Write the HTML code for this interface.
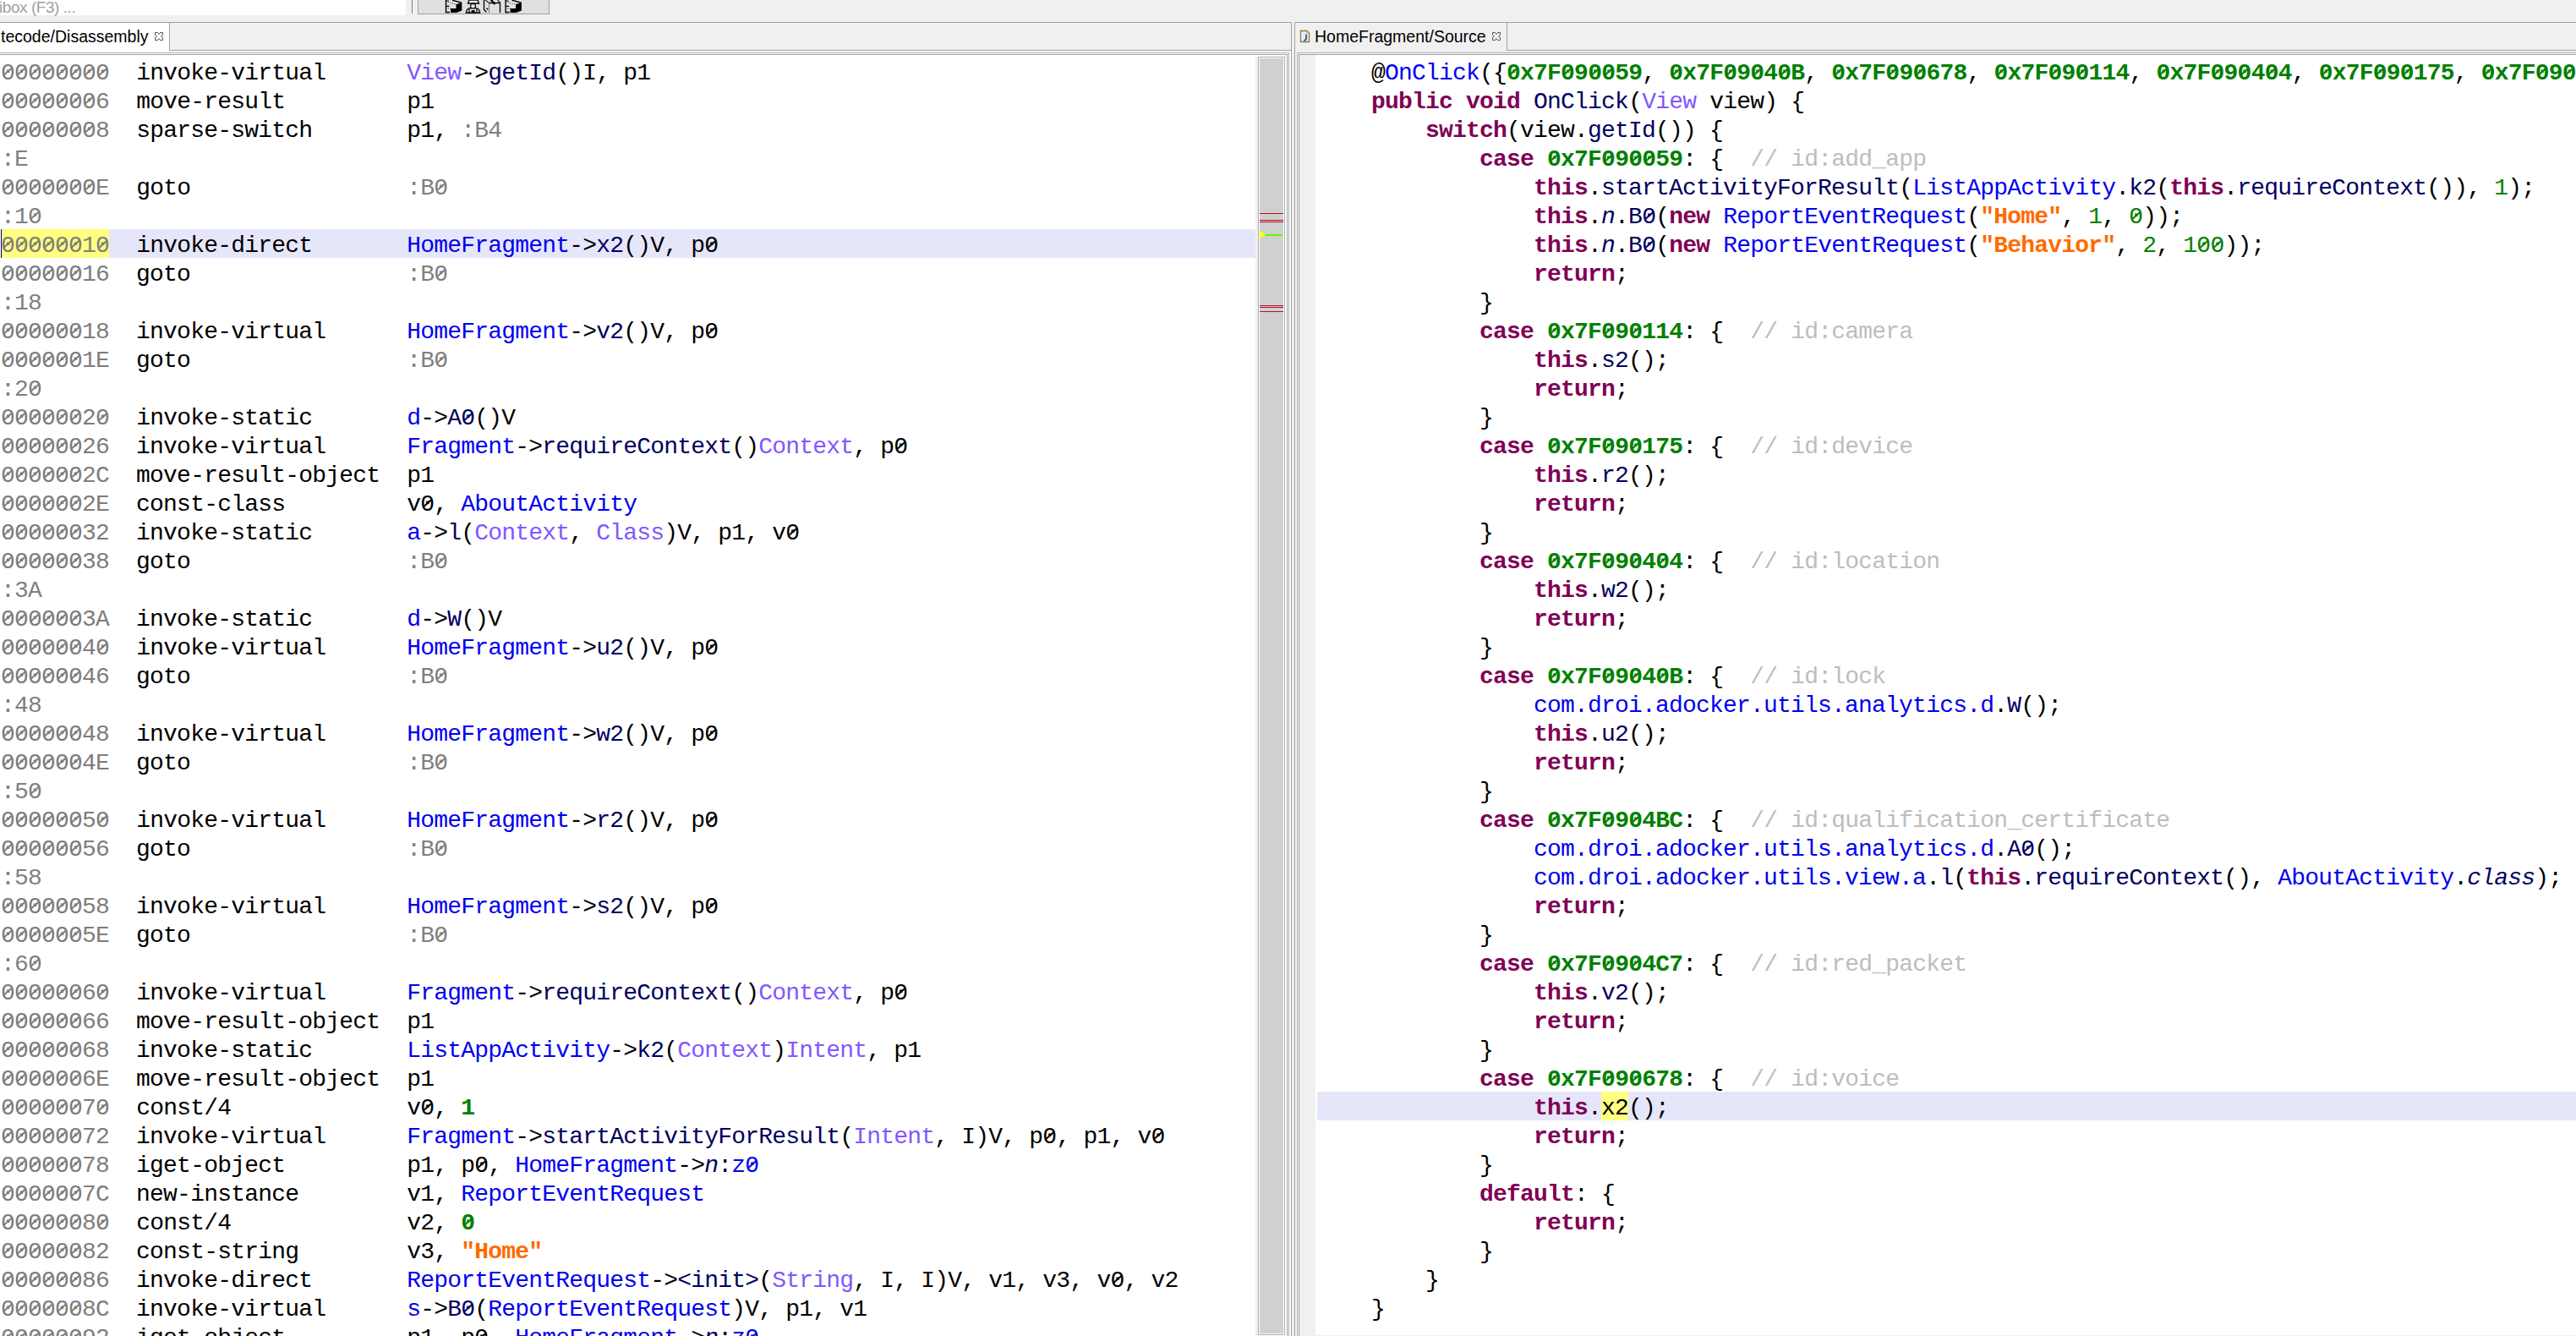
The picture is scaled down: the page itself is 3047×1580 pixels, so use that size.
<!DOCTYPE html>
<html><head><meta charset="utf-8">
<style>
html,body{margin:0;padding:0}
body{width:3047px;height:1580px;overflow:hidden;position:relative;background:#f0f0f0;font-family:"Liberation Sans",sans-serif}
.abs{position:absolute;box-sizing:border-box}
.code{position:absolute;overflow:hidden;font-family:"Liberation Mono",monospace;font-size:28px;line-height:34px;letter-spacing:-0.8px;color:#000;background:#fff}
.ln{position:absolute;left:0;right:0;height:34px;line-height:40px;white-space:pre;z-index:0}
.yb{position:absolute;top:0;height:34px;background:#ffff80;z-index:-1}
.ln>.tx{position:relative}
.hl{background:#e6e6fa}
.a{color:#7d7d7d}
.l{color:#808080}
.e{color:#8257ff}
.t{color:#0000f0}
.m{color:#000060}
.f{color:#000060;font-style:italic}
.k{color:#7f0055;font-weight:bold}
.n{color:#008000;font-weight:bold}
.g{color:#008000}
.s{color:#ff6a00;font-weight:bold}
.c{color:#bdbdbd}
.hy{}
.hya{color:#7d7d7d}
.z{position:relative}
.z::after{content:"";position:absolute;left:2.4px;top:13.3px;width:11.6px;height:1.6px;background:currentColor;transform:rotate(-42deg)}
.k .z::after,.n .z::after,.s .z::after{height:2.4px;top:12.9px}
.tab{font-size:19.5px;color:#000;white-space:pre}
</style></head><body>
<!-- top strip -->
<div class="abs" style="left:0;top:0;width:480px;height:18px;background:#fff"></div>
<div class="abs tab" style="left:-1px;top:-1px;color:#a0a0a0;font-size:19px;line-height:20px;letter-spacing:-0.45px">ibox (F3) ...</div>
<div class="abs" style="left:487px;top:0;width:1px;height:16px;background:#808080"></div>
<div class="abs" style="left:494px;top:-1px;width:156px;height:18px;background:#e0e0e0;border:1px solid #a0a0a0"></div>
<svg class="abs" style="left:0;top:0" width="700" height="18" viewBox="0 0 700 18">
 <g>
  <path d="M529,1 L545.5,3.5 L539.5,5.5 L529,3 Z M529,8 L539.5,10.5 L533,10.5 L529,9.5 Z" fill="#f4f4f4"/>
  <path d="M527.5,0 V14.5 H532" fill="none" stroke="#000" stroke-width="1.4"/>
  <path d="M527.5,1 H531 M527.5,7.3 H531.5" fill="none" stroke="#000" stroke-width="1.2"/>
  <path d="M535,0.3 L546,3.3" fill="none" stroke="#000" stroke-width="1.4"/>
  <path d="M529.5,2.3 L541,5.5 M529.5,9.5 L537,11" fill="none" stroke="#333" stroke-width="1" stroke-dasharray="1.5 1.2"/>
  <path d="M539.5,5 L546.3,3 L546.3,12.5 L540,15 L533,15 L533,10 L539.5,10 Z" fill="#000"/>
 </g>
 <g transform="translate(70.6,0)">
  <path d="M529,1 L545.5,3.5 L539.5,5.5 L529,3 Z M529,8 L539.5,10.5 L533,10.5 L529,9.5 Z" fill="#f4f4f4"/>
  <path d="M527.5,0 V14.5 H532" fill="none" stroke="#000" stroke-width="1.4"/>
  <path d="M527.5,1 H531 M527.5,7.3 H531.5" fill="none" stroke="#000" stroke-width="1.2"/>
  <path d="M535,0.3 L546,3.3" fill="none" stroke="#000" stroke-width="1.4"/>
  <path d="M529.5,2.3 L541,5.5 M529.5,9.5 L537,11" fill="none" stroke="#333" stroke-width="1" stroke-dasharray="1.5 1.2"/>
  <path d="M539.5,5 L546.3,3 L546.3,12.5 L540,15 L533,15 L533,10 L539.5,10 Z" fill="#000"/>
 </g>
 <path d="M553.5,4 L555,0 H565 L566.5,4 Z" fill="#f2efe8" stroke="#000" stroke-width="1.3"/>
 <circle cx="559.5" cy="7.3" r="3" fill="#f2ece6" stroke="#000" stroke-width="1.2"/>
 <path d="M551.3,15 Q552,9.8 556,9.8 H563 Q567,9.8 567.7,15 Z" fill="#ece8e4" stroke="#000" stroke-width="1.3"/>
 <path d="M555,10.5 V15 M564,10.5 V15" stroke="#000" stroke-width="1.2"/>
 <rect x="557.6" y="12" width="4" height="3.2" fill="#000"/>
 <path d="M572.5,0 V11.5 L575.5,14.5 M591.5,3.5 V15 M578.5,3.5 H591.5" fill="none" stroke="#000" stroke-width="1.3"/>
 <path d="M578.5,3.5 V15" fill="none" stroke="#7a6ab0" stroke-width="1"/>
 <path d="M574,0 L578.5,3.5 M588.5,0 L592,3.5" fill="none" stroke="#222" stroke-width="1.1"/>
 <path d="M580.5,-0.5 L585.5,5" fill="none" stroke="#000" stroke-width="2.2"/>
 <circle cx="576.3" cy="10.5" r="1.1" fill="#000"/>
</svg>

<!-- LEFT FOLDER -->
<div class="abs" style="left:-2px;top:26px;width:1530px;height:1600px;border-top:1px solid #a0a0a0;border-right:1px solid #a0a0a0;border-top-right-radius:2px;background:#f0f0f0"></div>
<div class="abs" style="left:0;top:27px;width:201px;height:34px;background:#fff;border-right:1px solid #a0a0a0"></div>
<div class="abs" style="left:200px;top:59px;width:1327px;height:1px;background:#a0a0a0"></div>
<div class="abs" style="left:0;top:60px;width:1527px;height:1540px;background:#fff"></div>
<div class="abs" style="left:-2px;top:62px;width:1527px;height:1600px;border-top:1px solid #a9acb3;border-right:1px solid #a9acb3;background:#fff"></div>
<div class="abs" style="left:-2px;top:64px;width:1525px;height:1600px;border-top:1px solid #a0a0a0;border-right:1px solid #a0a0a0;background:#fff"></div>
<div class="abs tab" style="left:1px;top:27px;height:32px;line-height:32px">tecode/Disassembly</div>
<svg class="abs" style="left:182px;top:37px" width="12" height="12" viewBox="0 0 12 12"><path d="M1.5 1.5 h3 l1.5 2 l1.5 -2 h3 v3 l-2 1.5 l2 1.5 v3 h-3 l-1.5 -2 l-1.5 2 h-3 v-3 l2 -1.5 l-2 -1.5 z" fill="none" stroke="#555" stroke-width="1"/></svg>
<div class="code" style="left:0;top:65px;width:1485px;height:1520px">
 <div style="position:absolute;left:1px;top:2px;right:0;bottom:0">
<div class="ln" style="top:0px"><span class="a"><span class="z">0</span><span class="z">0</span><span class="z">0</span><span class="z">0</span><span class="z">0</span><span class="z">0</span><span class="z">0</span><span class="z">0</span></span>  invoke-virtual      <span class="e">View</span>-&gt;<span class="m">getId</span>()I, p1</div>
<div class="ln" style="top:34px"><span class="a"><span class="z">0</span><span class="z">0</span><span class="z">0</span><span class="z">0</span><span class="z">0</span><span class="z">0</span><span class="z">0</span>6</span>  move-result         p1</div>
<div class="ln" style="top:68px"><span class="a"><span class="z">0</span><span class="z">0</span><span class="z">0</span><span class="z">0</span><span class="z">0</span><span class="z">0</span><span class="z">0</span>8</span>  sparse-switch       p1, <span class="l">:B4</span></div>
<div class="ln" style="top:102px"><span class="l">:E</span></div>
<div class="ln" style="top:136px"><span class="a"><span class="z">0</span><span class="z">0</span><span class="z">0</span><span class="z">0</span><span class="z">0</span><span class="z">0</span><span class="z">0</span>E</span>  goto                <span class="l">:B<span class="z">0</span></span></div>
<div class="ln" style="top:170px"><span class="l">:1<span class="z">0</span></span></div>
<div class="ln hl" style="top:204px"><span class="yb" style="left:0px;width:128px"></span><span class="hya"><span class="z">0</span><span class="z">0</span><span class="z">0</span><span class="z">0</span><span class="z">0</span><span class="z">0</span>1<span class="z">0</span></span>  invoke-direct       <span class="t">HomeFragment</span>-&gt;<span class="m">x2</span>()V, p<span class="z">0</span></div>
<div class="ln" style="top:238px"><span class="a"><span class="z">0</span><span class="z">0</span><span class="z">0</span><span class="z">0</span><span class="z">0</span><span class="z">0</span>16</span>  goto                <span class="l">:B<span class="z">0</span></span></div>
<div class="ln" style="top:272px"><span class="l">:18</span></div>
<div class="ln" style="top:306px"><span class="a"><span class="z">0</span><span class="z">0</span><span class="z">0</span><span class="z">0</span><span class="z">0</span><span class="z">0</span>18</span>  invoke-virtual      <span class="t">HomeFragment</span>-&gt;<span class="m">v2</span>()V, p<span class="z">0</span></div>
<div class="ln" style="top:340px"><span class="a"><span class="z">0</span><span class="z">0</span><span class="z">0</span><span class="z">0</span><span class="z">0</span><span class="z">0</span>1E</span>  goto                <span class="l">:B<span class="z">0</span></span></div>
<div class="ln" style="top:374px"><span class="l">:2<span class="z">0</span></span></div>
<div class="ln" style="top:408px"><span class="a"><span class="z">0</span><span class="z">0</span><span class="z">0</span><span class="z">0</span><span class="z">0</span><span class="z">0</span>2<span class="z">0</span></span>  invoke-static       <span class="t">d</span>-&gt;<span class="m">A<span class="z">0</span></span>()V</div>
<div class="ln" style="top:442px"><span class="a"><span class="z">0</span><span class="z">0</span><span class="z">0</span><span class="z">0</span><span class="z">0</span><span class="z">0</span>26</span>  invoke-virtual      <span class="t">Fragment</span>-&gt;<span class="m">requireContext</span>()<span class="e">Context</span>, p<span class="z">0</span></div>
<div class="ln" style="top:476px"><span class="a"><span class="z">0</span><span class="z">0</span><span class="z">0</span><span class="z">0</span><span class="z">0</span><span class="z">0</span>2C</span>  move-result-object  p1</div>
<div class="ln" style="top:510px"><span class="a"><span class="z">0</span><span class="z">0</span><span class="z">0</span><span class="z">0</span><span class="z">0</span><span class="z">0</span>2E</span>  const-class         v<span class="z">0</span>, <span class="t">AboutActivity</span></div>
<div class="ln" style="top:544px"><span class="a"><span class="z">0</span><span class="z">0</span><span class="z">0</span><span class="z">0</span><span class="z">0</span><span class="z">0</span>32</span>  invoke-static       <span class="t">a</span>-&gt;<span class="m">l</span>(<span class="e">Context</span>, <span class="e">Class</span>)V, p1, v<span class="z">0</span></div>
<div class="ln" style="top:578px"><span class="a"><span class="z">0</span><span class="z">0</span><span class="z">0</span><span class="z">0</span><span class="z">0</span><span class="z">0</span>38</span>  goto                <span class="l">:B<span class="z">0</span></span></div>
<div class="ln" style="top:612px"><span class="l">:3A</span></div>
<div class="ln" style="top:646px"><span class="a"><span class="z">0</span><span class="z">0</span><span class="z">0</span><span class="z">0</span><span class="z">0</span><span class="z">0</span>3A</span>  invoke-static       <span class="t">d</span>-&gt;<span class="m">W</span>()V</div>
<div class="ln" style="top:680px"><span class="a"><span class="z">0</span><span class="z">0</span><span class="z">0</span><span class="z">0</span><span class="z">0</span><span class="z">0</span>4<span class="z">0</span></span>  invoke-virtual      <span class="t">HomeFragment</span>-&gt;<span class="m">u2</span>()V, p<span class="z">0</span></div>
<div class="ln" style="top:714px"><span class="a"><span class="z">0</span><span class="z">0</span><span class="z">0</span><span class="z">0</span><span class="z">0</span><span class="z">0</span>46</span>  goto                <span class="l">:B<span class="z">0</span></span></div>
<div class="ln" style="top:748px"><span class="l">:48</span></div>
<div class="ln" style="top:782px"><span class="a"><span class="z">0</span><span class="z">0</span><span class="z">0</span><span class="z">0</span><span class="z">0</span><span class="z">0</span>48</span>  invoke-virtual      <span class="t">HomeFragment</span>-&gt;<span class="m">w2</span>()V, p<span class="z">0</span></div>
<div class="ln" style="top:816px"><span class="a"><span class="z">0</span><span class="z">0</span><span class="z">0</span><span class="z">0</span><span class="z">0</span><span class="z">0</span>4E</span>  goto                <span class="l">:B<span class="z">0</span></span></div>
<div class="ln" style="top:850px"><span class="l">:5<span class="z">0</span></span></div>
<div class="ln" style="top:884px"><span class="a"><span class="z">0</span><span class="z">0</span><span class="z">0</span><span class="z">0</span><span class="z">0</span><span class="z">0</span>5<span class="z">0</span></span>  invoke-virtual      <span class="t">HomeFragment</span>-&gt;<span class="m">r2</span>()V, p<span class="z">0</span></div>
<div class="ln" style="top:918px"><span class="a"><span class="z">0</span><span class="z">0</span><span class="z">0</span><span class="z">0</span><span class="z">0</span><span class="z">0</span>56</span>  goto                <span class="l">:B<span class="z">0</span></span></div>
<div class="ln" style="top:952px"><span class="l">:58</span></div>
<div class="ln" style="top:986px"><span class="a"><span class="z">0</span><span class="z">0</span><span class="z">0</span><span class="z">0</span><span class="z">0</span><span class="z">0</span>58</span>  invoke-virtual      <span class="t">HomeFragment</span>-&gt;<span class="m">s2</span>()V, p<span class="z">0</span></div>
<div class="ln" style="top:1020px"><span class="a"><span class="z">0</span><span class="z">0</span><span class="z">0</span><span class="z">0</span><span class="z">0</span><span class="z">0</span>5E</span>  goto                <span class="l">:B<span class="z">0</span></span></div>
<div class="ln" style="top:1054px"><span class="l">:6<span class="z">0</span></span></div>
<div class="ln" style="top:1088px"><span class="a"><span class="z">0</span><span class="z">0</span><span class="z">0</span><span class="z">0</span><span class="z">0</span><span class="z">0</span>6<span class="z">0</span></span>  invoke-virtual      <span class="t">Fragment</span>-&gt;<span class="m">requireContext</span>()<span class="e">Context</span>, p<span class="z">0</span></div>
<div class="ln" style="top:1122px"><span class="a"><span class="z">0</span><span class="z">0</span><span class="z">0</span><span class="z">0</span><span class="z">0</span><span class="z">0</span>66</span>  move-result-object  p1</div>
<div class="ln" style="top:1156px"><span class="a"><span class="z">0</span><span class="z">0</span><span class="z">0</span><span class="z">0</span><span class="z">0</span><span class="z">0</span>68</span>  invoke-static       <span class="t">ListAppActivity</span>-&gt;<span class="m">k2</span>(<span class="e">Context</span>)<span class="e">Intent</span>, p1</div>
<div class="ln" style="top:1190px"><span class="a"><span class="z">0</span><span class="z">0</span><span class="z">0</span><span class="z">0</span><span class="z">0</span><span class="z">0</span>6E</span>  move-result-object  p1</div>
<div class="ln" style="top:1224px"><span class="a"><span class="z">0</span><span class="z">0</span><span class="z">0</span><span class="z">0</span><span class="z">0</span><span class="z">0</span>7<span class="z">0</span></span>  const/4             v<span class="z">0</span>, <span class="n">1</span></div>
<div class="ln" style="top:1258px"><span class="a"><span class="z">0</span><span class="z">0</span><span class="z">0</span><span class="z">0</span><span class="z">0</span><span class="z">0</span>72</span>  invoke-virtual      <span class="t">Fragment</span>-&gt;<span class="m">startActivityForResult</span>(<span class="e">Intent</span>, I)V, p<span class="z">0</span>, p1, v<span class="z">0</span></div>
<div class="ln" style="top:1292px"><span class="a"><span class="z">0</span><span class="z">0</span><span class="z">0</span><span class="z">0</span><span class="z">0</span><span class="z">0</span>78</span>  iget-object         p1, p<span class="z">0</span>, <span class="t">HomeFragment</span>-&gt;<span class="f">n</span>:<span class="t">z<span class="z">0</span></span></div>
<div class="ln" style="top:1326px"><span class="a"><span class="z">0</span><span class="z">0</span><span class="z">0</span><span class="z">0</span><span class="z">0</span><span class="z">0</span>7C</span>  new-instance        v1, <span class="t">ReportEventRequest</span></div>
<div class="ln" style="top:1360px"><span class="a"><span class="z">0</span><span class="z">0</span><span class="z">0</span><span class="z">0</span><span class="z">0</span><span class="z">0</span>8<span class="z">0</span></span>  const/4             v2, <span class="n"><span class="z">0</span></span></div>
<div class="ln" style="top:1394px"><span class="a"><span class="z">0</span><span class="z">0</span><span class="z">0</span><span class="z">0</span><span class="z">0</span><span class="z">0</span>82</span>  const-string        v3, <span class="s">&quot;Home&quot;</span></div>
<div class="ln" style="top:1428px"><span class="a"><span class="z">0</span><span class="z">0</span><span class="z">0</span><span class="z">0</span><span class="z">0</span><span class="z">0</span>86</span>  invoke-direct       <span class="t">ReportEventRequest</span>-&gt;<span class="m">&lt;init&gt;</span>(<span class="e">String</span>, I, I)V, v1, v3, v<span class="z">0</span>, v2</div>
<div class="ln" style="top:1462px"><span class="a"><span class="z">0</span><span class="z">0</span><span class="z">0</span><span class="z">0</span><span class="z">0</span><span class="z">0</span>8C</span>  invoke-virtual      <span class="t">s</span>-&gt;<span class="m">B<span class="z">0</span></span>(<span class="t">ReportEventRequest</span>)V, p1, v1</div>
<div class="ln" style="top:1496px"><span class="a"><span class="z">0</span><span class="z">0</span><span class="z">0</span><span class="z">0</span><span class="z">0</span><span class="z">0</span>92</span>  iget-object         p1, p<span class="z">0</span>, <span class="t">HomeFragment</span>-&gt;<span class="f">n</span>:<span class="t">z<span class="z">0</span></span></div>
 </div>
 <div class="abs" style="left:1px;top:206px;width:1px;height:34px;background:#000080"></div>
</div>
<!-- overview ruler -->
<div class="abs" style="left:1485px;top:67px;width:3px;height:1520px;background:#f0f0f0"></div>
<div class="abs" style="left:1488px;top:67px;width:32px;height:1512px;border:1px solid #a9acb3;background:#fff"></div>
<div class="abs" style="left:1490px;top:69px;width:28px;height:1508px;background:#d0d0d0"></div>
<div class="abs" style="left:1490px;top:252px;width:28px;height:1px;background:#b0101c"></div>
<div class="abs" style="left:1490px;top:260px;width:28px;height:1px;background:#b0101c"></div>
<div class="abs" style="left:1490px;top:262px;width:28px;height:1px;background:#b0101c"></div>
<svg class="abs" style="left:1490px;top:272px" width="28" height="12"><path d="M0 1 L7.5 5.5 L0 10 Z" fill="#ffff00"/><rect x="6" y="5" width="21" height="2" fill="#55ff00"/></svg>
<div class="abs" style="left:1490px;top:361px;width:28px;height:1px;background:#b0101c"></div>
<div class="abs" style="left:1490px;top:363px;width:28px;height:1px;background:#b0101c"></div>
<div class="abs" style="left:1490px;top:368px;width:28px;height:1px;background:#b0101c"></div>

<!-- RIGHT FOLDER -->
<div class="abs" style="left:1531px;top:26px;width:1600px;height:1600px;border-top:1px solid #a0a0a0;border-left:1px solid #a0a0a0;border-top-left-radius:2px;background:#f0f0f0"></div>
<div class="abs" style="left:1532px;top:27px;width:251px;height:33px;border-right:1px solid #a0a0a0"></div>
<div class="abs" style="left:1782px;top:59px;width:1300px;height:1px;background:#a0a0a0"></div>
<div class="abs" style="left:1532px;top:62px;width:2px;height:1520px;background:#f5f5f5"></div>
<div class="abs" style="left:1534px;top:62px;width:1600px;height:1600px;border-top:1px solid #a9acb3;border-left:1px solid #a9acb3;background:#fff"></div>
<div class="abs" style="left:1536px;top:64px;width:1600px;height:1600px;border-top:1px solid #a0a0a0;border-left:1px solid #a0a0a0;background:#f0f0f0"></div>
<svg class="abs" style="left:1537px;top:35px" width="14" height="16" viewBox="0 0 14 16"><path d="M1.5 1.5 H9 L11.5 4 V14.5 H1.5 Z" fill="#e6edf8" stroke="#9a7a30" stroke-width="1.3"/><path d="M9 2 V4 H11" fill="#f0d890" stroke="#c8a040" stroke-width="1"/><path d="M8 5.5 V10.5 Q8 13 5 12.8" fill="none" stroke="#2a64a0" stroke-width="1.9"/></svg>
<div class="abs tab" style="left:1555px;top:27px;height:32px;line-height:32px">HomeFragment/Source</div>
<svg class="abs" style="left:1764px;top:37px" width="12" height="12" viewBox="0 0 12 12"><path d="M1.5 1.5 h3 l1.5 2 l1.5 -2 h3 v3 l-2 1.5 l2 1.5 v3 h-3 l-1.5 -2 l-1.5 2 h-3 v-3 l2 -1.5 l-2 -1.5 z" fill="none" stroke="#555" stroke-width="1"/></svg>
<div class="code" style="left:1556px;top:65px;width:1500px;height:1520px">
 <div style="position:absolute;left:2px;top:2px;right:0;bottom:0">
<div class="ln" style="top:0px">    @<span class="t">OnClick</span>({<span class="n"><span class="z">0</span>x7F<span class="z">0</span>9<span class="z">0</span><span class="z">0</span>59</span>, <span class="n"><span class="z">0</span>x7F<span class="z">0</span>9<span class="z">0</span>4<span class="z">0</span>B</span>, <span class="n"><span class="z">0</span>x7F<span class="z">0</span>9<span class="z">0</span>678</span>, <span class="n"><span class="z">0</span>x7F<span class="z">0</span>9<span class="z">0</span>114</span>, <span class="n"><span class="z">0</span>x7F<span class="z">0</span>9<span class="z">0</span>4<span class="z">0</span>4</span>, <span class="n"><span class="z">0</span>x7F<span class="z">0</span>9<span class="z">0</span>175</span>, <span class="n"><span class="z">0</span>x7F<span class="z">0</span>9<span class="z">0</span>4BC</span>, <span class="n"><span class="z">0</span>x7F<span class="z">0</span>9<span class="z">0</span>4C7</span>})</div>
<div class="ln" style="top:34px">    <span class="k">public</span> <span class="k">void</span> <span class="m">OnClick</span>(<span class="e">View</span> view) {</div>
<div class="ln" style="top:68px">        <span class="k">switch</span>(view.<span class="m">getId</span>()) {</div>
<div class="ln" style="top:102px">            <span class="k">case</span> <span class="n"><span class="z">0</span>x7F<span class="z">0</span>9<span class="z">0</span><span class="z">0</span>59</span>: {  <span class="c">// id:add_app</span></div>
<div class="ln" style="top:136px">                <span class="k">this</span>.<span class="m">startActivityForResult</span>(<span class="t">ListAppActivity</span>.<span class="m">k2</span>(<span class="k">this</span>.<span class="m">requireContext</span>()), <span class="g">1</span>);</div>
<div class="ln" style="top:170px">                <span class="k">this</span>.<span class="f">n</span>.<span class="m">B<span class="z">0</span></span>(<span class="k">new</span> <span class="t">ReportEventRequest</span>(<span class="s">&quot;Home&quot;</span>, <span class="g">1</span>, <span class="g"><span class="z">0</span></span>));</div>
<div class="ln" style="top:204px">                <span class="k">this</span>.<span class="f">n</span>.<span class="m">B<span class="z">0</span></span>(<span class="k">new</span> <span class="t">ReportEventRequest</span>(<span class="s">&quot;Behavior&quot;</span>, <span class="g">2</span>, <span class="g">1<span class="z">0</span><span class="z">0</span></span>));</div>
<div class="ln" style="top:238px">                <span class="k">return</span>;</div>
<div class="ln" style="top:272px">            }</div>
<div class="ln" style="top:306px">            <span class="k">case</span> <span class="n"><span class="z">0</span>x7F<span class="z">0</span>9<span class="z">0</span>114</span>: {  <span class="c">// id:camera</span></div>
<div class="ln" style="top:340px">                <span class="k">this</span>.<span class="m">s2</span>();</div>
<div class="ln" style="top:374px">                <span class="k">return</span>;</div>
<div class="ln" style="top:408px">            }</div>
<div class="ln" style="top:442px">            <span class="k">case</span> <span class="n"><span class="z">0</span>x7F<span class="z">0</span>9<span class="z">0</span>175</span>: {  <span class="c">// id:device</span></div>
<div class="ln" style="top:476px">                <span class="k">this</span>.<span class="m">r2</span>();</div>
<div class="ln" style="top:510px">                <span class="k">return</span>;</div>
<div class="ln" style="top:544px">            }</div>
<div class="ln" style="top:578px">            <span class="k">case</span> <span class="n"><span class="z">0</span>x7F<span class="z">0</span>9<span class="z">0</span>4<span class="z">0</span>4</span>: {  <span class="c">// id:location</span></div>
<div class="ln" style="top:612px">                <span class="k">this</span>.<span class="m">w2</span>();</div>
<div class="ln" style="top:646px">                <span class="k">return</span>;</div>
<div class="ln" style="top:680px">            }</div>
<div class="ln" style="top:714px">            <span class="k">case</span> <span class="n"><span class="z">0</span>x7F<span class="z">0</span>9<span class="z">0</span>4<span class="z">0</span>B</span>: {  <span class="c">// id:lock</span></div>
<div class="ln" style="top:748px">                <span class="t">com.droi.adocker.utils.analytics.d</span>.<span class="m">W</span>();</div>
<div class="ln" style="top:782px">                <span class="k">this</span>.<span class="m">u2</span>();</div>
<div class="ln" style="top:816px">                <span class="k">return</span>;</div>
<div class="ln" style="top:850px">            }</div>
<div class="ln" style="top:884px">            <span class="k">case</span> <span class="n"><span class="z">0</span>x7F<span class="z">0</span>9<span class="z">0</span>4BC</span>: {  <span class="c">// id:qualification_certificate</span></div>
<div class="ln" style="top:918px">                <span class="t">com.droi.adocker.utils.analytics.d</span>.<span class="m">A<span class="z">0</span></span>();</div>
<div class="ln" style="top:952px">                <span class="t">com.droi.adocker.utils.view.a</span>.<span class="m">l</span>(<span class="k">this</span>.<span class="m">requireContext</span>(), <span class="t">AboutActivity</span>.<span class="f">class</span>);</div>
<div class="ln" style="top:986px">                <span class="k">return</span>;</div>
<div class="ln" style="top:1020px">            }</div>
<div class="ln" style="top:1054px">            <span class="k">case</span> <span class="n"><span class="z">0</span>x7F<span class="z">0</span>9<span class="z">0</span>4C7</span>: {  <span class="c">// id:red_packet</span></div>
<div class="ln" style="top:1088px">                <span class="k">this</span>.<span class="m">v2</span>();</div>
<div class="ln" style="top:1122px">                <span class="k">return</span>;</div>
<div class="ln" style="top:1156px">            }</div>
<div class="ln" style="top:1190px">            <span class="k">case</span> <span class="n"><span class="z">0</span>x7F<span class="z">0</span>9<span class="z">0</span>678</span>: {  <span class="c">// id:voice</span></div>
<div class="ln hl" style="top:1224px"><span class="yb" style="left:336px;width:32px"></span>                <span class="k">this</span>.<span class="hy">x2</span>();</div>
<div class="ln" style="top:1258px">                <span class="k">return</span>;</div>
<div class="ln" style="top:1292px">            }</div>
<div class="ln" style="top:1326px">            <span class="k">default</span>: {</div>
<div class="ln" style="top:1360px">                <span class="k">return</span>;</div>
<div class="ln" style="top:1394px">            }</div>
<div class="ln" style="top:1428px">        }</div>
<div class="ln" style="top:1462px">    }</div>
 </div>
</div>
<div class="abs" style="left:1556px;top:1579px;width:1500px;height:1px;background:#f0f0f0"></div>
</body></html>
